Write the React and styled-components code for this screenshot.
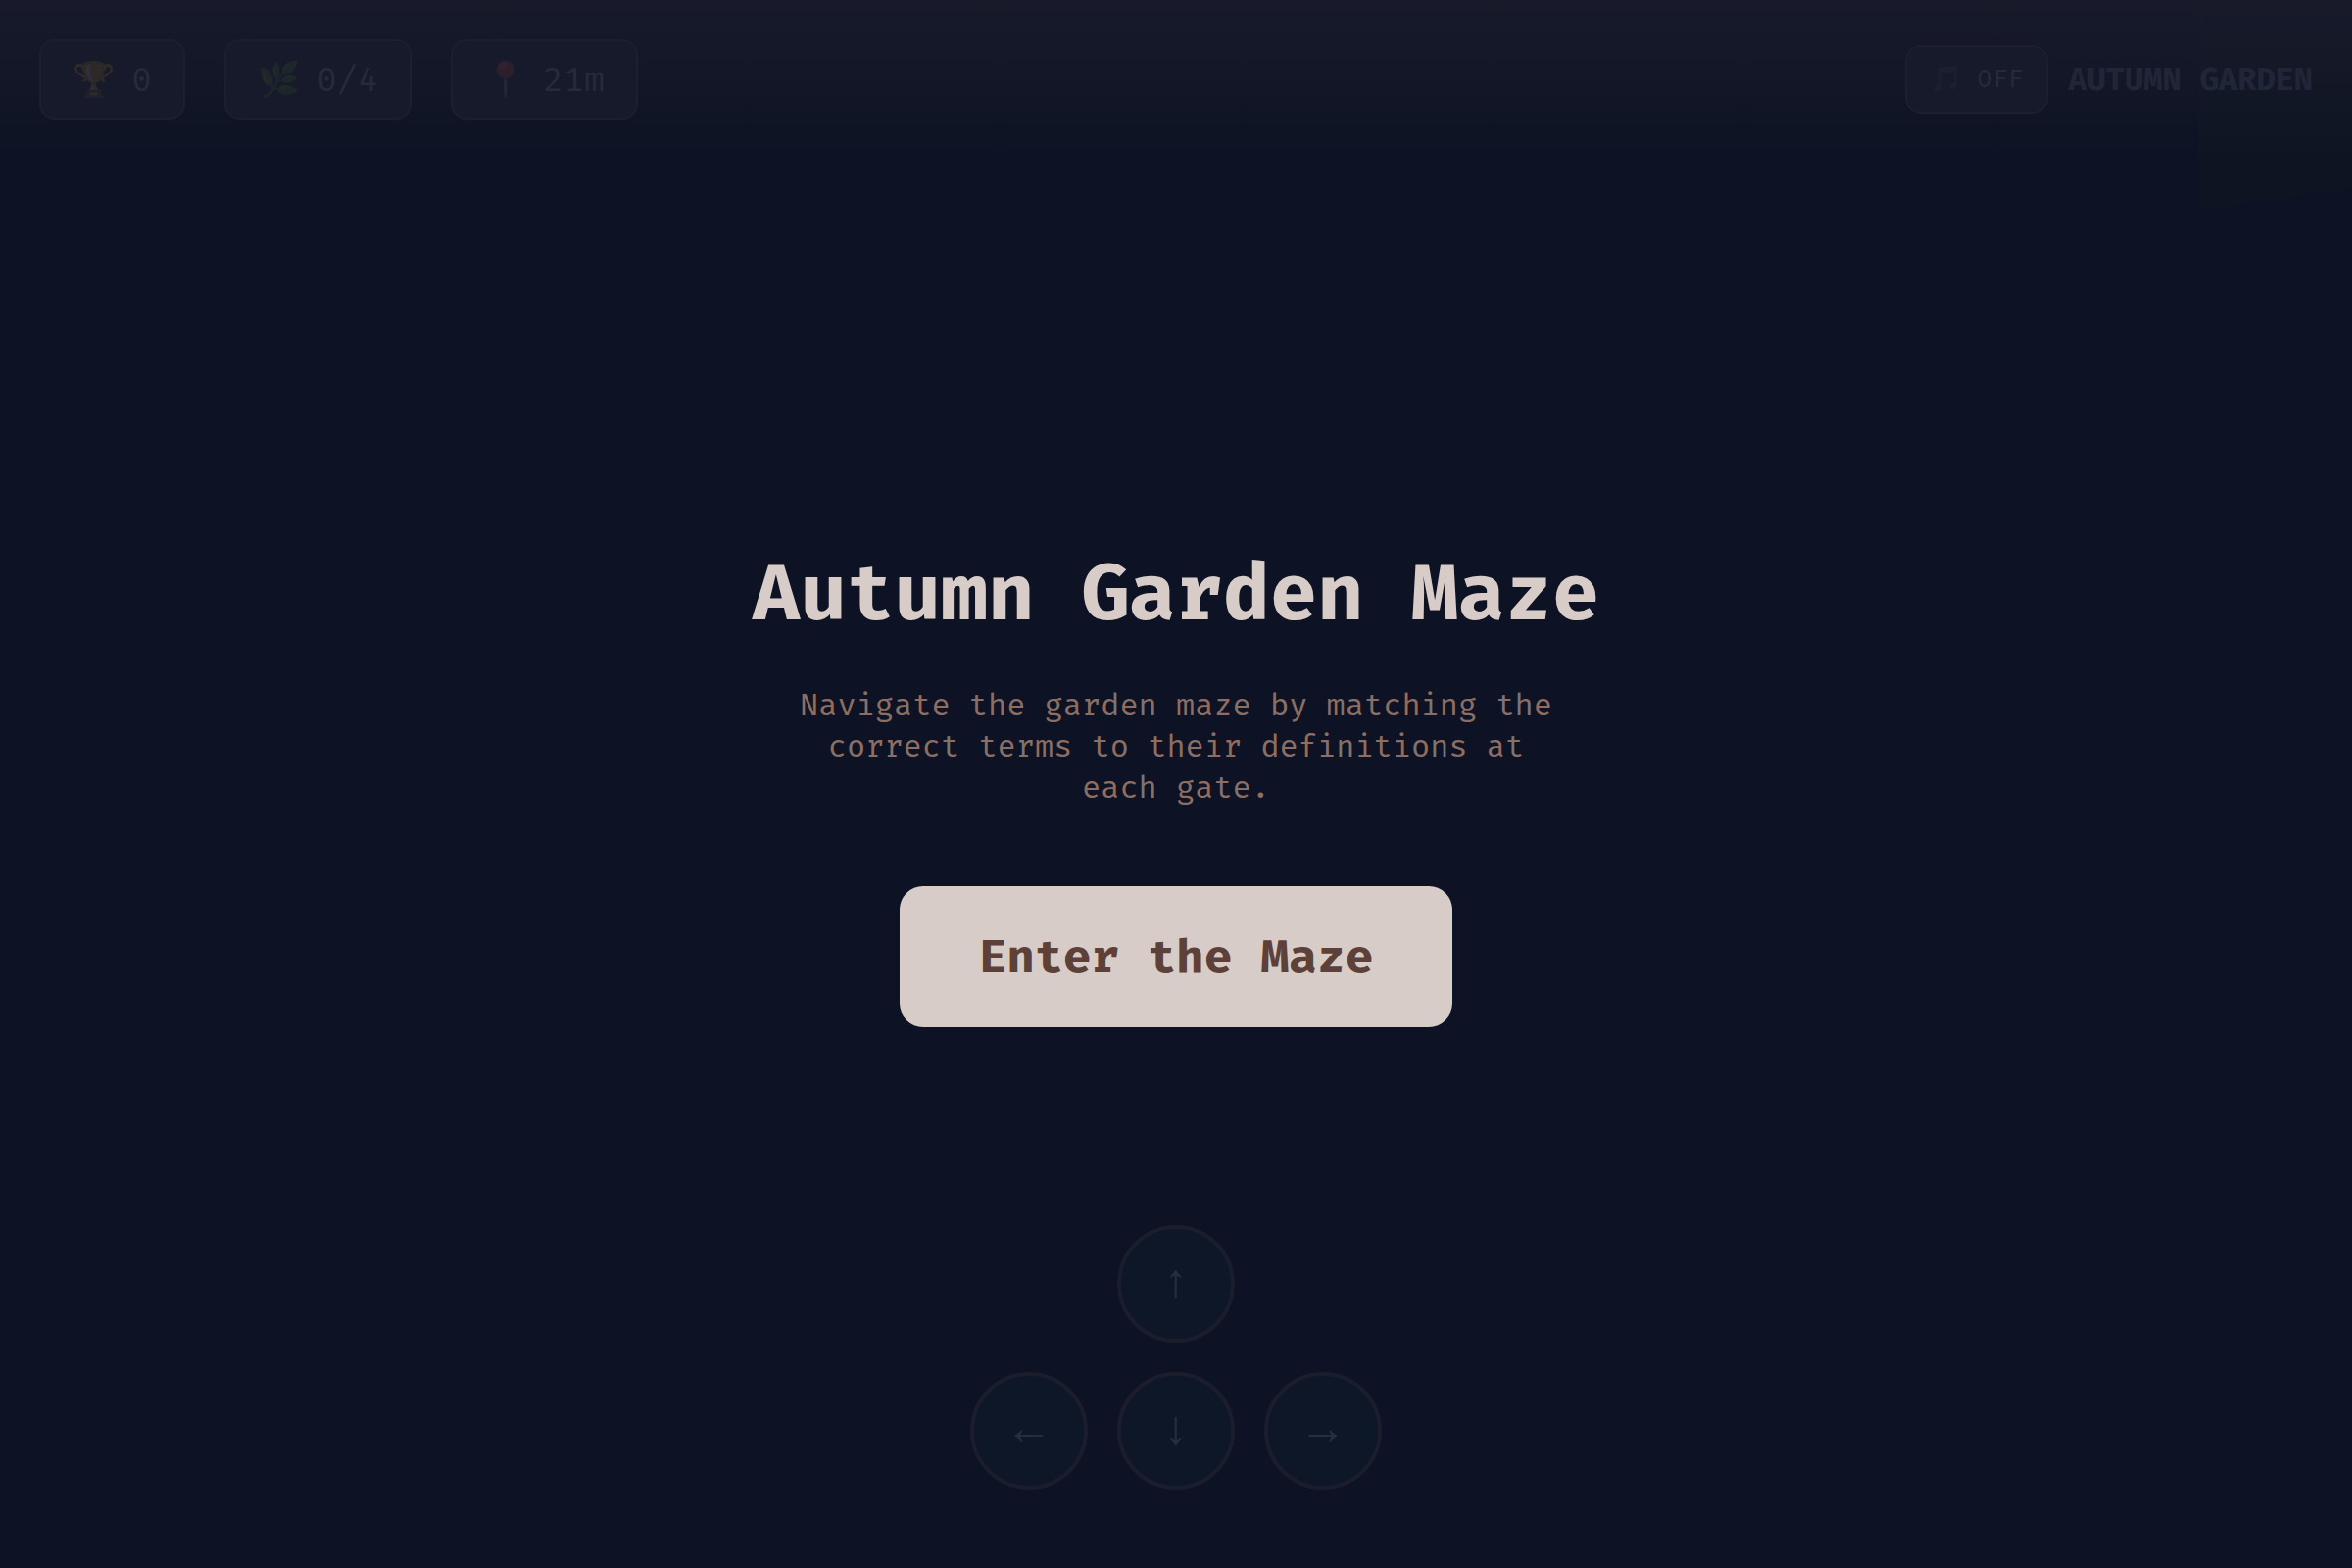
import React from 'react';
import styled, { createGlobalStyle, ThemeProvider } from 'styled-components';

const theme = {
  mono: '"Fira Mono", "Fira Code", "DejaVu Sans Mono", "Liberation Mono", monospace',
  background: '#0d1324',
  panel: '#161a2a',
  panelBorder: '#1d1e2e',
  dimText: '#242b3c',
  titleText: '#202638',
  cream: '#d7ccc8',
  brown: '#8d6e63',
  darkBrown: '#5d4037',
};

const GlobalStyle = createGlobalStyle`
  * {
    box-sizing: border-box;
  }
  body {
    margin: 0;
    background-color: ${props => props.theme.background};
  }
  button {
    margin: 0;
    font-family: inherit;
    cursor: pointer;
  }
`;
const Root = styled.div`
  position: relative;
  isolation: isolate;
  min-height: 100vh;
  display: grid;
  grid-template-rows: 1fr auto 1fr;
  font-family: ${props => props.theme.mono};
  color: ${props => props.theme.dimText};
`;
const Wall = styled.svg`
  position: absolute;
  z-index: -1;
  top: 0;
  right: 0;
  width: 157px;
  height: 214px;
  pointer-events: none;
`;
const Header = styled.header`
  align-self: start;
  display: flex;
  align-items: center;
  justify-content: space-between;
  padding: 40px;
  background: linear-gradient(to bottom, #181a2a, rgba(24, 26, 42, 0));
`;
const Group = styled.div`
  display: flex;
  align-items: center;
  gap: ${props => props.$gap};
`;
const Stat = styled.div`
  display: flex;
  gap: 16px;
  padding: 16px 32px;
  border: 2px solid ${props => props.theme.panelBorder};
  border-radius: 16px;
  background-color: ${props => props.theme.panel};
  font-size: 35px;
  line-height: 46px;
`;
const Emoji = styled.span`
  opacity: ${props => props.$faint ? 0.08 : 0.1};
`;
const MusicButton = styled.button`
  display: flex;
  gap: 16px;
  padding: 16px 24px;
  border: 2px solid ${props => props.theme.panelBorder};
  border-radius: 16px;
  background-color: ${props => props.theme.panel};
  color: inherit;
  font-size: 26px;
  line-height: 34px;
`;
const LevelName = styled.div`
  color: ${props => props.theme.titleText};
  font-size: 32px;
  font-weight: 700;
  line-height: 42px;
`;
const Intro = styled.main`
  display: flex;
  flex-direction: column;
  align-items: center;
  text-align: center;
`;
const Title = styled.h1`
  margin: 0 0 40px;
  color: ${props => props.theme.cream};
  font-size: 80px;
  line-height: 106px;
`;
const Description = styled.p`
  max-width: 800px;
  margin: 0 0 80px;
  color: ${props => props.theme.brown};
  font-size: 32px;
  line-height: 42px;
`;
const StartButton = styled.button`
  padding: 40px 80px;
  border: 0;
  border-radius: 24px;
  background-color: ${props => props.theme.cream};
  color: ${props => props.theme.darkBrown};
  font-size: 48px;
  font-weight: 700;
  line-height: 64px;
`;
const Pad = styled.nav`
  align-self: end;
  justify-self: center;
  display: grid;
  grid-template-columns: repeat(3, 120px);
  grid-template-areas:
    ". up ."
    "left down right";
  gap: 30px;
  padding-bottom: 80px;
`;
const PadButton = styled.button`
  grid-area: ${props => props.$area};
  display: flex;
  align-items: center;
  justify-content: center;
  height: 120px;
  padding: 0;
  border: 4px solid #1b1d2d;
  border-radius: 50%;
  background-color: #0e1728;
  color: #252e3f;
  font-family: "Liberation Mono", "Courier New", monospace;
  font-size: 48px;
  line-height: 48px;
`;

const stats = [
  { icon: '🏆', value: '0' },
  { icon: '🌿', value: '0/4' },
  { icon: '📍', value: '21m' },
];

const directions = [
  { area: 'up', arrow: '↑' },
  { area: 'left', arrow: '←' },
  { area: 'down', arrow: '↓' },
  { area: 'right', arrow: '→' },
];

const App = () => (
  <ThemeProvider theme={theme}>
    <GlobalStyle />
    <Root>
      <Wall viewBox="0 0 157 214" aria-hidden="true">
        <path d="M0 0H157V192L0 214Z" fill="#141d1c" fillOpacity="0.25" />
      </Wall>
      <Header>
        <Group $gap="40px">
          {stats.map(({icon, value}) => (
            <Stat key={icon}>
              <Emoji>{icon}</Emoji>
              <span>{value}</span>
            </Stat>
          ))}
        </Group>
        <Group $gap="20px">
          <MusicButton type="button">
            <Emoji $faint>🎵</Emoji>
            <span>OFF</span>
          </MusicButton>
          <LevelName>AUTUMN GARDEN</LevelName>
        </Group>
      </Header>
      <Intro>
        <Title>Autumn Garden Maze</Title>
        <Description>
          Navigate the garden maze by matching the correct terms to their definitions at each gate.
        </Description>
        <StartButton type="button">Enter the Maze</StartButton>
      </Intro>
      <Pad aria-label="Movement">
        {directions.map(({area, arrow}) => (
          <PadButton key={area} type="button" $area={area} aria-label={area}>{arrow}</PadButton>
        ))}
      </Pad>
    </Root>
  </ThemeProvider>
);

export default App;
